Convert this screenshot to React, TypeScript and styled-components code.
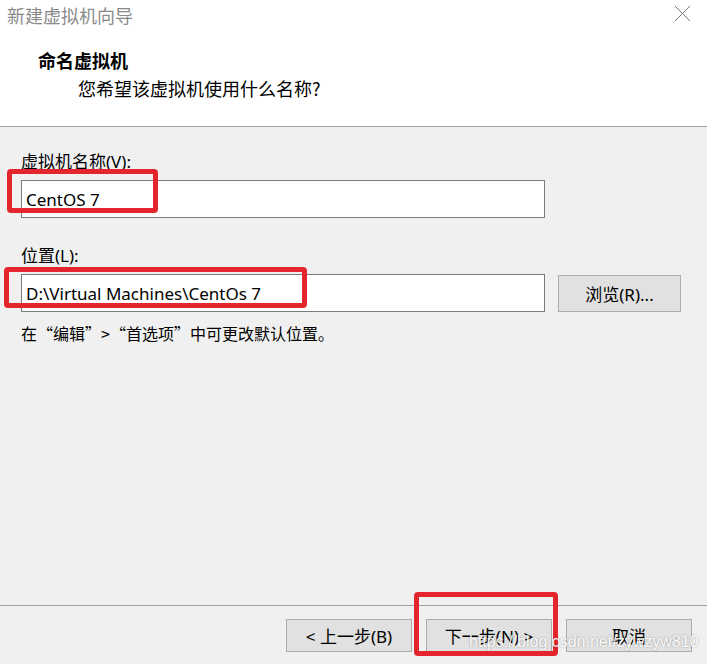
import React from 'react';
import styled, { createGlobalStyle } from 'styled-components';

const GlobalStyle = createGlobalStyle`
    html, body {
        margin: 0;
        padding: 0;
        background: #f0f0f0;
    }
    body {
        font-family: "Noto Sans", "Noto Sans CJK SC", sans-serif;
    }
`;

const Window = styled.div`
    position: relative;
    width: 707px;
    height: 664px;
    display: flex;
    flex-direction: column;
    background: #f0f0f0;
    overflow: hidden;
`;

const Header = styled.div`
    height: 126px;
    flex: 0 0 auto;
    background: #ffffff;
    border-bottom: 1px solid #a0a0a0;
`;

const TitleBar = styled.div`
    height: 30px;
    display: flex;
    align-items: center;
    justify-content: space-between;
    padding: 0 16px 0 7px;
`;

const WindowTitle = styled.span`
    font-size: 18px;
    color: #8a8a8a;
    font-family: "Noto Sans CJK SC", sans-serif;
    line-height: 30px;
`;

const CloseIcon = styled.svg`
    width: 17px;
    height: 17px;
    margin-top: -4px;
`;

const HeaderTitle = styled.div`
    margin: 18px 0 0 38px;
    font-size: 18px;
    line-height: 24px;
    font-weight: 700;
    color: #000;
    font-family: "Noto Sans CJK SC", sans-serif;
`;

const HeaderSubtitle = styled.div`
    margin: 4px 0 0 78px;
    font-size: 18px;
    line-height: 24px;
    color: #000;
    font-family: "Noto Sans CJK SC", sans-serif;
`;

const Body = styled.div`
    flex: 1;
    padding: 25px 0 0 21px;
`;

const FieldLabel = styled.div<{ $gap?: number }>`
    margin-top: ${p => p.$gap ?? 0}px;
    font-size: 17px;
    line-height: 20px;
    color: #000;
`;

const FieldRow = styled.div`
    display: flex;
    align-items: center;
    gap: 13px;
    margin-top: 8px;
`;

const Marked = styled.div`
    position: relative;
    display: flex;
`;

const Highlight = styled.div<{ $left: number; $top: number; $w: number; $h: number }>`
    position: absolute;
    left: ${p => p.$left}px;
    top: ${p => p.$top}px;
    width: ${p => p.$w}px;
    height: ${p => p.$h}px;
    border: 5px solid #e3262d;
    border-radius: 4px;
    box-sizing: border-box;
    pointer-events: none;
`;

const TextInput = styled.div`
    width: 524px;
    height: 38px;
    box-sizing: border-box;
    border: 1px solid #7a7a7a;
    background: #fff;
    padding-left: 4px;
    display: flex;
    align-items: center;
    font-size: 17px;
    color: #000;
`;

const Button = styled.div<{ $width: number; $height: number }>`
    width: ${p => p.$width}px;
    height: ${p => p.$height}px;
    box-sizing: border-box;
    background: #e1e1e1;
    border: 1px solid #adadad;
    display: flex;
    align-items: center;
    justify-content: center;
    font-size: 17px;
    color: #000;
    white-space: pre;
`;

const Hint = styled.div`
    margin-top: 11px;
    font-size: 16px;
    line-height: 20px;
    color: #000;
    font-family: "Noto Sans CJK SC", sans-serif;
`;

const Footer = styled.div`
    flex: 0 0 auto;
    box-sizing: border-box;
    border-top: 1px solid #a0a0a0;
    height: 59px;
    display: flex;
    justify-content: flex-end;
    align-items: flex-start;
    gap: 14px;
    padding: 13px 15px 0 0;
`;

// csdn watermark laid over the footer buttons
const Watermark = styled.div`
    position: absolute;
    left: 469px;
    top: 633px;
    font-family: "Liberation Sans", Arial, sans-serif;
    font-size: 16px;
    color: rgba(255, 255, 255, 0.95);
    text-shadow: 0 0 2px rgba(0, 0, 0, 0.35);
    pointer-events: none;
`;

export default function App() {
    return (
        <>
            <GlobalStyle />
            <Window>
                <Header>
                    <TitleBar>
                        <WindowTitle>新建虚拟机向导</WindowTitle>
                        <CloseIcon viewBox="0 0 17 17">
                            <path d="M1 1 L16 16 M16 1 L1 16" stroke="#777" strokeWidth="1" fill="none" />
                        </CloseIcon>
                    </TitleBar>
                    <HeaderTitle>命名虚拟机</HeaderTitle>
                    <HeaderSubtitle>您希望该虚拟机使用什么名称?</HeaderSubtitle>
                </Header>

                <Body>
                    <FieldLabel>虚拟机名称(V):</FieldLabel>
                    <FieldRow>
                        <Marked>
                            <TextInput>CentOS 7</TextInput>
                            <Highlight $left={-14} $top={-11} $w={151} $h={44} />
                        </Marked>
                    </FieldRow>

                    <FieldLabel $gap={28}>位置(L):</FieldLabel>
                    <FieldRow>
                        <Marked>
                            <TextInput>D:\Virtual Machines\CentOs 7</TextInput>
                            <Highlight $left={-17} $top={-7} $w={303} $h={41} />
                        </Marked>
                        <Button $width={123} $height={37}>浏览(R)...</Button>
                    </FieldRow>

                    <Hint>在“编辑”&gt;“首选项”中可更改默认位置。</Hint>
                </Body>

                <Footer>
                    <Button $width={126} $height={33}>{'< 上一步(B)'}</Button>
                    <Marked>
                        <Button $width={126} $height={33}>{'下一步(N) >'}</Button>
                        <Highlight $left={-12} $top={-27} $w={144} $h={64} />
                    </Marked>
                    <Button $width={126} $height={33}>取消</Button>
                </Footer>

                <Watermark>https://blog.csdn.net/zywzyw810</Watermark>
            </Window>
        </>
    );
}
